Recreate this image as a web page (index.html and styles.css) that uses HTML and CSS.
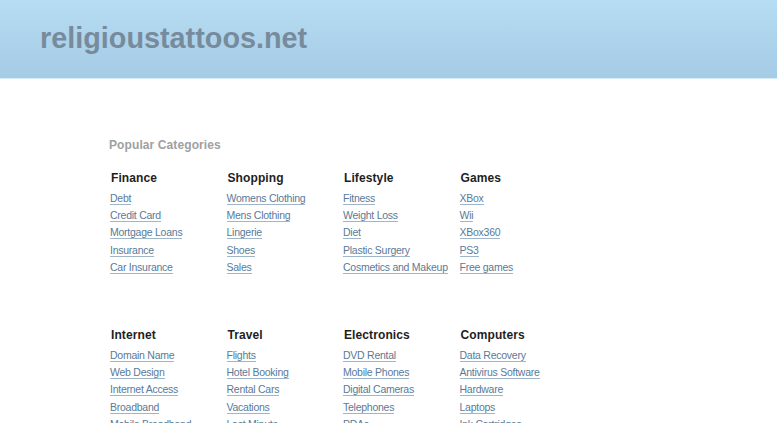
FILE: index.html
```html
<!DOCTYPE html>
<html lang="en">
<head>
    <meta charset="UTF-8">
    <title>religioustattoos.net</title>
    <link rel="stylesheet" href="styles.css">
</head>
<body>
    <div class="header">
        <h1 class="logo">religioustattoos.net</h1>
    </div>
    <div class="content">
        <h2 class="popular">Popular Categories</h2>
        <div class="cats">
            <div class="cat">
                <h3>Finance</h3>
                <a href="#">Debt</a>
                <a href="#">Credit Card</a>
                <a href="#">Mortgage Loans</a>
                <a href="#">Insurance</a>
                <a href="#">Car Insurance</a>
            </div>
            <div class="cat">
                <h3>Shopping</h3>
                <a href="#">Womens Clothing</a>
                <a href="#">Mens Clothing</a>
                <a href="#">Lingerie</a>
                <a href="#">Shoes</a>
                <a href="#">Sales</a>
            </div>
            <div class="cat">
                <h3>Lifestyle</h3>
                <a href="#">Fitness</a>
                <a href="#">Weight Loss</a>
                <a href="#">Diet</a>
                <a href="#">Plastic Surgery</a>
                <a href="#">Cosmetics and Makeup</a>
            </div>
            <div class="cat">
                <h3>Games</h3>
                <a href="#">XBox</a>
                <a href="#">Wii</a>
                <a href="#">XBox360</a>
                <a href="#">PS3</a>
                <a href="#">Free games</a>
            </div>
            <div class="cat">
                <h3>Internet</h3>
                <a href="#">Domain Name</a>
                <a href="#">Web Design</a>
                <a href="#">Internet Access</a>
                <a href="#">Broadband</a>
                <a href="#">Mobile Broadband</a>
            </div>
            <div class="cat">
                <h3>Travel</h3>
                <a href="#">Flights</a>
                <a href="#">Hotel Booking</a>
                <a href="#">Rental Cars</a>
                <a href="#">Vacations</a>
                <a href="#">Last Minute</a>
            </div>
            <div class="cat">
                <h3>Electronics</h3>
                <a href="#">DVD Rental</a>
                <a href="#">Mobile Phones</a>
                <a href="#">Digital Cameras</a>
                <a href="#">Telephones</a>
                <a href="#">PDAs</a>
            </div>
            <div class="cat">
                <h3>Computers</h3>
                <a href="#">Data Recovery</a>
                <a href="#">Antivirus Software</a>
                <a href="#">Hardware</a>
                <a href="#">Laptops</a>
                <a href="#">Ink Cartridges</a>
            </div>
        </div>
    </div>
</body>
</html>
```

FILE: styles.css
```css
* {
    box-sizing: border-box;
}
body {
    margin: 0;
    font-family: 'Liberation Sans', Arial, sans-serif;
    background-color: #fff;
}
.header {
    height: 79px;
    padding: 0 40px;
    background: linear-gradient(#b6ddf3, #a5cbe5);
    border-bottom: 1px solid #d6ebf8;
}
.logo {
    margin: 0;
    padding-top: 19px;
    font-size: 28.8px;
    line-height: 38px;
    font-weight: bold;
    color: #778b9c;
}
.content {
    padding: 58px 0 0 109px;
}
.popular {
    margin: 0 0 18px;
    font-size: 12px;
    line-height: 16px;
    font-weight: bold;
    letter-spacing: 0.1px;
    color: #a0a0a0;
}
.cats {
    display: grid;
    grid-template-columns: repeat(4, 116.5px);
    grid-auto-rows: 157px;
}
.cat {
    display: flex;
    flex-direction: column;
    align-items: flex-start;
    padding-left: 1px;
}
.cat h3 {
    margin: 0 0 6px 1px;
    font-size: 12px;
    line-height: 15px;
    font-weight: bold;
    letter-spacing: 0.1px;
    color: #1e1e1e;
}
.cat a {
    font-size: 10.5px;
    line-height: 12px;
    letter-spacing: -0.25px;
    margin-bottom: 4.2px;
    color: #5a7a98;
    text-decoration: none;
    border-bottom: 1px solid #9fb6ca;
}
```
